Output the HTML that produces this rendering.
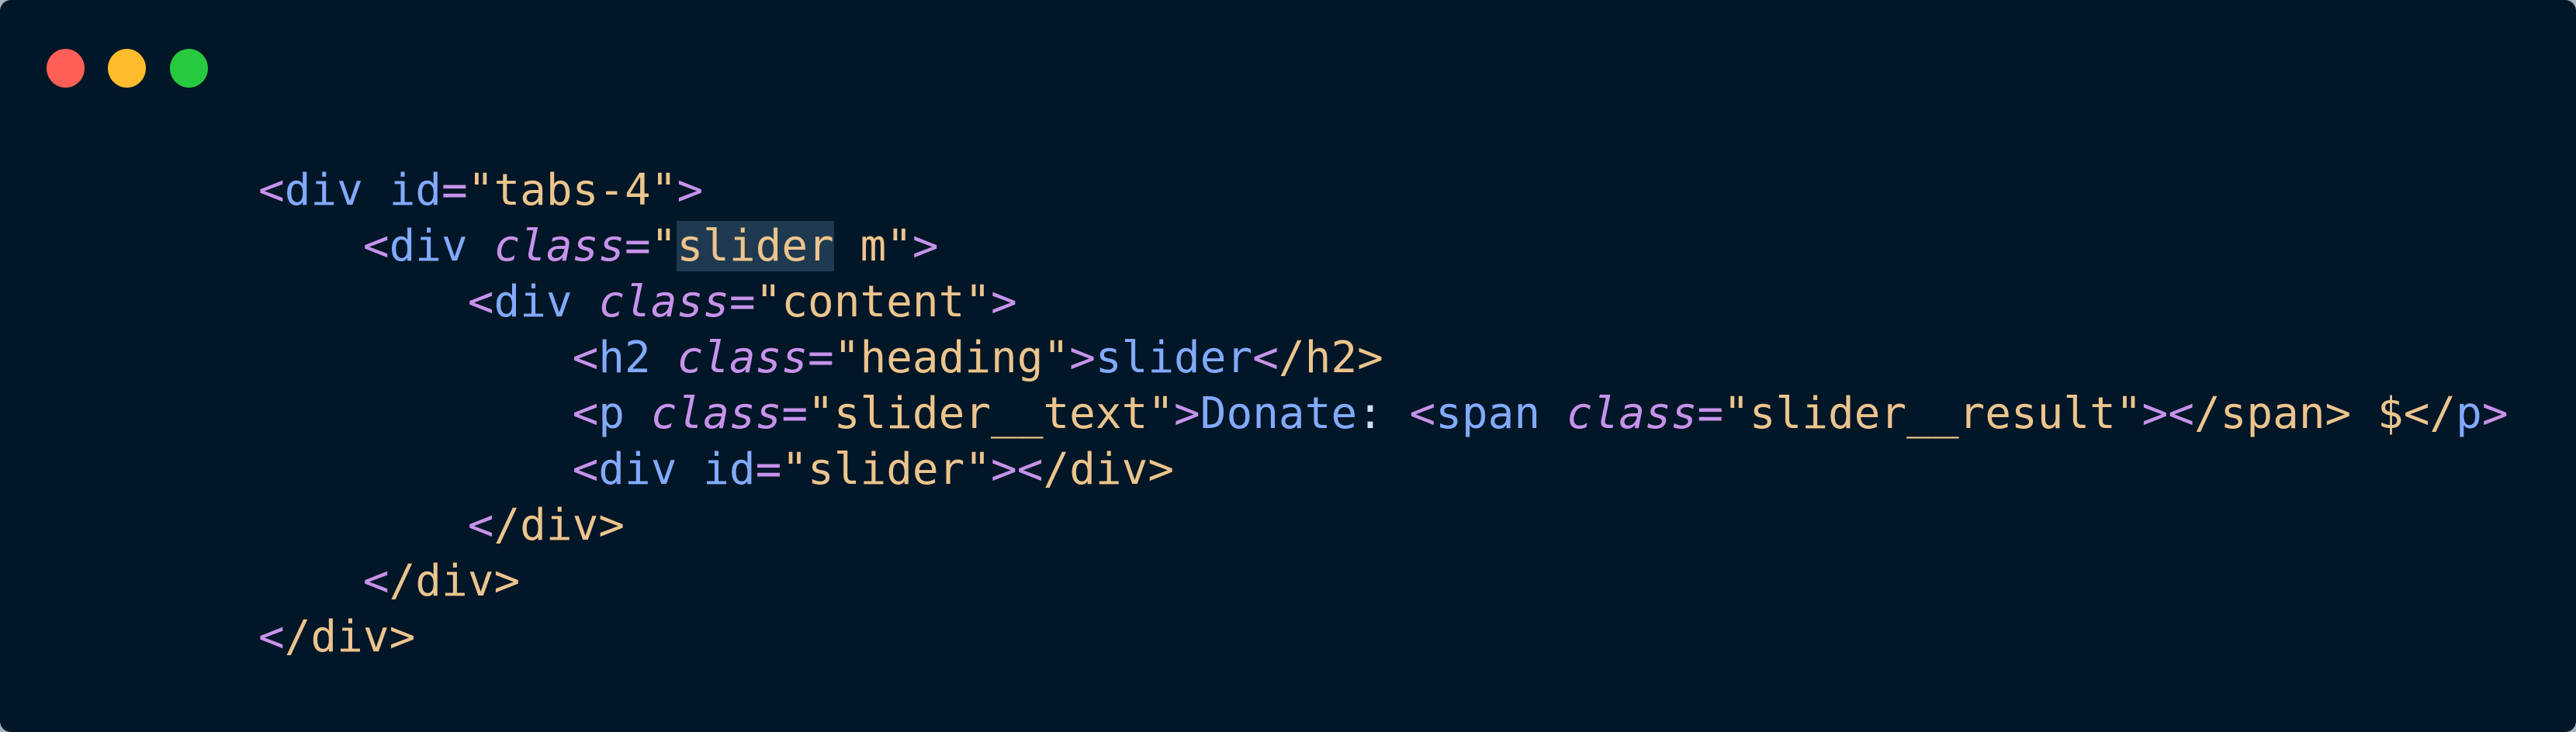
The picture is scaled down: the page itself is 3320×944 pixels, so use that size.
<!DOCTYPE html>
<html><head><meta charset="utf-8"><style>
html,body{margin:0;padding:0;background:#a9b3bd;}
.win{position:absolute;left:0;top:0;width:3320px;height:944px;background:#011627;border-radius:14px;overflow:hidden;}
.dot{position:absolute;top:63px;width:49px;height:50px;border-radius:50%;}
pre{position:absolute;left:333px;top:210px;margin:0;font-family:"DejaVu Sans Mono","Liberation Mono",monospace;font-size:56px;line-height:72px;color:#d6deeb;}
.p{color:#c792ea}.b{color:#82aaff}.y{color:#ecc48d}.i{color:#c792ea;font-style:italic}.g{color:#d6deeb}
.h{background:#1f3a50}
</style></head><body><div class="win">
<div class="dot" style="left:60px;background:#ff5f56"></div>
<div class="dot" style="left:139px;background:#ffbd2e"></div>
<div class="dot" style="left:219px;background:#27c93f"></div>
<pre><span class="p">&lt;</span><span class="b">div</span> <span class="b">id</span><span class="p">=</span><span class="y">"tabs-4"</span><span class="p">&gt;</span>
    <span class="p">&lt;</span><span class="b">div</span> <span class="i">class</span><span class="p">=</span><span class="y">"<span class="h">slider</span> m"</span><span class="p">&gt;</span>
        <span class="p">&lt;</span><span class="b">div</span> <span class="i">class</span><span class="p">=</span><span class="y">"content"</span><span class="p">&gt;</span>
            <span class="p">&lt;</span><span class="b">h2</span> <span class="i">class</span><span class="p">=</span><span class="y">"heading"</span><span class="p">&gt;</span><span class="b">slider</span><span class="p">&lt;</span><span class="y">/h2&gt;</span>
            <span class="p">&lt;</span><span class="b">p</span> <span class="i">class</span><span class="p">=</span><span class="y">"slider__text"</span><span class="p">&gt;</span><span class="b">Donate</span><span class="g">:</span> <span class="p">&lt;</span><span class="b">span</span> <span class="i">class</span><span class="p">=</span><span class="y">"slider__result"</span><span class="p">&gt;&lt;</span><span class="y">/span&gt; $&lt;/</span><span class="b">p</span><span class="p">&gt;</span>
            <span class="p">&lt;</span><span class="b">div</span> <span class="b">id</span><span class="p">=</span><span class="y">"slider"</span><span class="p">&gt;&lt;</span><span class="y">/div&gt;</span>
        <span class="p">&lt;</span><span class="y">/div&gt;</span>
    <span class="p">&lt;</span><span class="y">/div&gt;</span>
<span class="p">&lt;</span><span class="y">/div&gt;</span></pre>
</div></body></html>
